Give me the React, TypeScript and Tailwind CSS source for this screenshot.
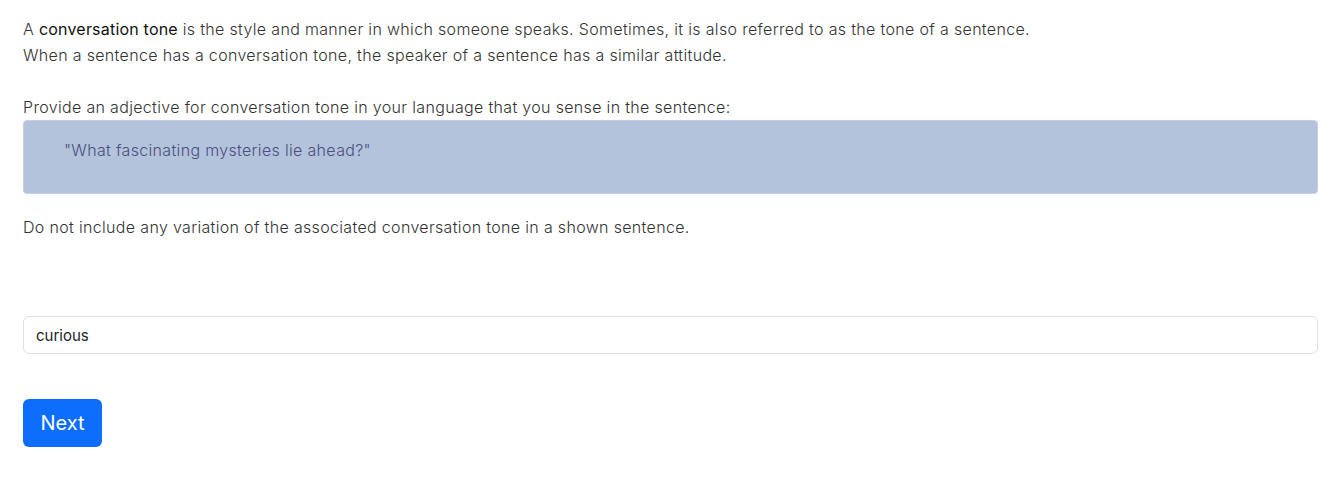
import React from 'react';

const App: React.FC = () => {
  return (
    <div className="min-h-screen bg-white pl-[23px] pr-[22px] pt-[16px] font-['Inter','Noto_Sans',sans-serif] text-[16px] font-light leading-[26px] tracking-[0.33px] text-[#333]">
      <p>
        A <span className="font-normal tracking-[0.2px] text-[#111]">conversation tone</span> is the style and manner in which someone speaks. Sometimes, it is also referred to as the tone of a sentence.
        <br />
        When a sentence has a conversation tone, the speaker of a sentence has a similar attitude.
      </p>
      <p className="mt-[26px]">Provide an adjective for conversation tone in your language that you sense in the sentence:</p>
      <div className="h-[74px] rounded-[4px] border border-[#c9cde6] bg-[#b3c3dc] pl-[40px] pt-[16px] text-[#4b4f7c]">
        "What fascinating mysteries lie ahead?"
      </div>
      <p className="mt-[20px]">Do not include any variation of the associated conversation tone in a shown sentence.</p>
      <input
        type="text"
        defaultValue="curious"
        className="mt-[76px] block h-[38px] w-full rounded-[6px] border border-[#dee2e6] px-[12px] text-[15px] font-normal tracking-normal text-[#212529] outline-none"
      />
      <button className="mt-[45px] h-[48px] w-[79px] rounded-[6px] bg-[#0d6efd] text-[20px] font-normal tracking-normal text-white">
        Next
      </button>
    </div>
  );
};

export default App;
